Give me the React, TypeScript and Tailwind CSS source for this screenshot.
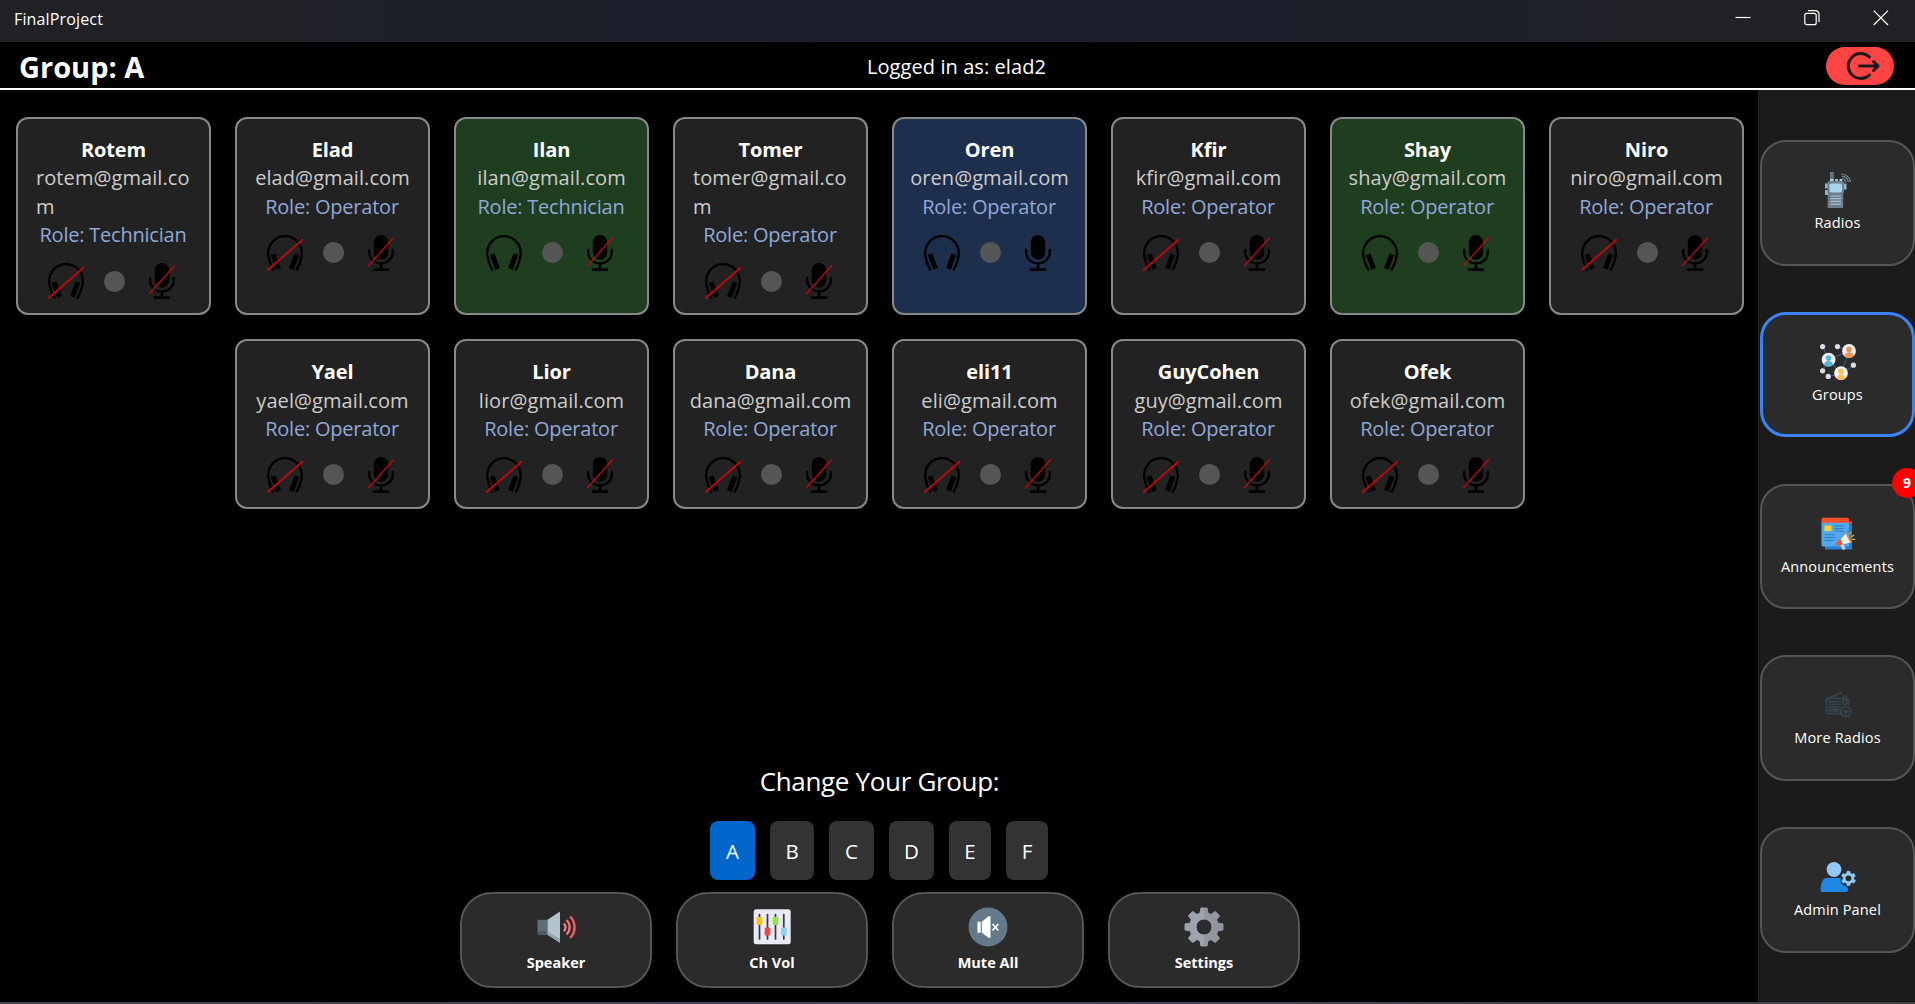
import React from "react";

type Status = "idle" | "listening" | "talking";

interface Member {
  name: string;
  email: string;
  role: "Operator" | "Technician";
  status: Status;
}

const op = (name: string, user: string, status: Status = "idle", role: Member["role"] = "Operator"): Member => ({
  name,
  email: `${user}@gmail.com`,
  role,
  status,
});

const members: Member[] = [
  op("Rotem", "rotem", "idle", "Technician"),
  op("Elad", "elad"),
  op("Ilan", "ilan", "listening", "Technician"),
  op("Tomer", "tomer"),
  op("Oren", "oren", "talking"),
  op("Kfir", "kfir"),
  op("Shay", "shay", "listening"),
  op("Niro", "niro"),
  op("Yael", "yael"),
  op("Lior", "lior"),
  op("Dana", "dana"),
  op("eli11", "eli"),
  op("GuyCohen", "guy"),
  op("Ofek", "ofek"),
];

const cardColors: Record<Status, string> = {
  idle: "bg-[#222222]",
  listening: "bg-[#1f3d1f]",
  talking: "bg-[#1e2e4d]",
};

function Headphones({ off }: { off: boolean }) {
  return (
    <svg width="36" height="36" viewBox="0 0 36 36" fill="none" stroke="#000" strokeLinecap="round">
      <path d="M1.2 20V18.200a16.800 17 0 0 1 33.600 0V20" strokeWidth="2.300" />
      <path d="M1.400 21c.8 5 2.400 9.500 4.800 13.700M34.600 21c-.8 5-2.400 9.500-4.800 13.700" strokeWidth="2.400" />
      <path d="M7 21.600l3.700 10M29 21.600l-3.700 10" strokeWidth="5" strokeLinecap="square" />
      {off && <path d="M.8 35L35.400 4.800" stroke="#c00a0a" strokeWidth="1.800" />}
    </svg>
  );
}

function Mic({ off }: { off: boolean }) {
  return (
    <svg width="36" height="36" viewBox="0 0 36 36" fill="none" stroke="#000" strokeLinecap="round">
      <rect x="10.800" y="0" width="14.400" height="24.700" rx="7.200" fill="#000" stroke="none" />
      <path d="M6.200 15v2.500a11.800 11 0 0 0 23.600 0V15" strokeWidth="2.300" />
      <path d="M18 28.500V34" strokeWidth="2.600" />
      <path d="M11 34.600h14" strokeWidth="2.600" />
      {off && <path d="M5.500 30.800L30.500 2.700" stroke="#c00a0a" strokeWidth="1.300" />}
    </svg>
  );
}

function MemberCard({ member }: { member: Member }) {
  const wraps = member.email.length > 14;
  return (
    <div
      className={`flex w-[195px] flex-col items-center rounded-xl border-2 border-[#888888] px-3.5 pt-[17px] pb-3.5 text-[20px] leading-[28.4px] ${cardColors[member.status]}`}
    >
      <div className="font-bold tracking-[-0.1px] text-white">{member.name}</div>
      <div className={`break-all tracking-[0.08px] text-[#cccccc] ${wraps ? "w-[155px]" : "whitespace-nowrap"}`}>
        {member.email}
      </div>
      <div className="pr-px tracking-[-0.22px] text-[#8fa8d8]">Role: {member.role}</div>
      <div className="mt-[13.5px] flex items-center pl-px">
        <Headphones off={member.status === "idle"} />
        <span className="mr-[19px] ml-5 size-[21px] rounded-full bg-[#555555]" />
        <Mic off={member.status !== "talking"} />
      </div>
    </div>
  );
}

function RadioIcon() {
  return (
    <svg width="36" height="36" viewBox="0 0 36 36">
      <rect x="10" y="0" width="3.800" height="9" fill="#66757f" />
      <path d="M10 7h3.500v3H10zM15.200 7h2.600v3h-2.600zM19.500 7h2.600v3h-2.600z" fill="#a9d3e8" />
      <path d="M5 11.500h3v5H5zM5 18h3v5H5zM23.500 11.500h3v6h-3z" fill="#8fb4c7" />
      <path d="M7.500 10.500a1.500 1.500 0 0 1 1.500-1.500h13.500a1.500 1.500 0 0 1 1.500 1.500v9.500l-.8 2V35a1 1 0 0 1-1 1H8.700a1 1 0 0 1-1-1V22z" fill="#6d7d8b" />
      <rect x="9.500" y="11.500" width="12.500" height="9" rx="1.800" fill="#a9d3e8" />
      <path d="M10.500 24h10.500M10.500 26.700h10.500M10.500 29.400h10.500M10.500 32.100h10.500" stroke="#a3c3d3" strokeWidth="1.200" />
      <path d="M22 6.500a4.500 4.500 0 0 1 3.800 3.500M21.800 4.200a7 7 0 0 1 6.500 5.800M21.500 2a9.300 9.300 0 0 1 9 8" fill="none" stroke="#6f8c9c" strokeWidth="1.200" />
    </svg>
  );
}

function Person({ x, y, color }: { x: number; y: number; color: string }) {
  return (
    <g transform={`translate(${x} ${y})`}>
      <circle r="6.900" fill="#f3f1f8" />
      <circle cy="-1.600" r="2.800" fill={color} />
      <path d="M-4.500 5.200C-4.500 0 4.500 0 4.500 5.200A6.900 6.900 0 0 1-4.500 5.200z" fill={color} />
    </g>
  );
}

function GroupsIcon() {
  return (
    <svg width="36" height="36" viewBox="0 0 36 36">
      <path d="M2.500 2.500L8.500 15.500 29 7 17.500 2.500M29 7l-8 22.500L8.500 15.500 2.500 27M8 32.500l13-3L34 21" stroke="#3d5c96" fill="none" />
      {[[2.600, 2.600], [17.500, 2.600], [2.600, 26.800], [8.200, 32.400], [33.400, 21.200]].map(([x, y]) => (
        <circle key={`${x}-${y}`} cx={x} cy={y} r="2.600" fill="#dddbe8" />
      ))}
      <Person x={29} y={7} color="#f0944a" />
      <Person x={8.600} y={15.700} color="#55b7d6" />
      <Person x={21} y={29.100} color="#fbc34d" />
    </svg>
  );
}

function NewsIcon() {
  return (
    <svg width="36" height="36" viewBox="0 0 36 36">
      <path d="M5 5h27v28.500H5z" fill="#2382cf" />
      <path d="M28 5h4v4h-4z" fill="#e6391e" />
      <path d="M1.500 6H29v24.500H3A1.500 1.500 0 0 1 1.500 29z" fill="#52a8ec" />
      <path d="M29 12v16L14 30.500z" fill="#3d99e2" />
      <path d="M1.500 3.200A1.500 1.500 0 0 1 3 1.700h24.500A1.500 1.500 0 0 1 29 3.200v3.600H1.500z" fill="#ff5128" />
      <rect x="4.500" y="9.500" width="7" height="5.600" fill="#ffd02b" />
      <path d="M14.500 10h9.500M14.500 12.500h9.500M14.500 15h9.500M4.500 18.800H15M4.500 21.500H15M4.500 24.500h9" stroke="#2a7dc4" strokeWidth="1.100" />
      <path d="M19.500 28.500l3.300-1.500 3 5.500-2.800 1.700z" fill="#c9cfdb" />
      <path d="M17 25.500l3.500-2 2.700 4.500-3.500 1.700c-2 .4-4-2.500-2.700-4.200z" fill="#ff5128" />
      <path d="M20.500 23.500L26 17l5 9.500-8 1.700z" fill="#f1f4fa" />
      <path d="M25 17.200l1.700-.7 5 9.500-1.400 1z" fill="#ff8f1f" />
      <path d="M29.500 18.500l1.300-3M31.300 20.700l3-1.600M32 23.200l3.200.4" stroke="#ff9d1f" strokeWidth="1.200" />
    </svg>
  );
}

function MoreRadiosIcon() {
  return (
    <svg width="36" height="36" viewBox="0 0 36 36" fill="none" stroke="#36444e" strokeWidth="1.600">
      <path d="M7 11.500L22.500 5.500M22.500 11.500l2.500-2.300 2.500 2.300" />
      <path d="M21 26.500H7.500A1.200 1.200 0 0 1 6.300 25.300V12.700A1.200 1.200 0 0 1 7.500 11.500h20A1.200 1.200 0 0 1 28.700 12.700V18" />
      <path d="M8 14.500h13M8 17.300h13M8 20h13M8.500 24v-1.800h10V24z" />
      <circle cx="25" cy="15" r="2.300" />
      <circle cx="25.800" cy="24.600" r="5" strokeWidth="1.900" />
      <path d="M25.800 21.500v6.200M22.700 24.600h6.200" />
    </svg>
  );
}

/** Outline of a cog centred on (0, 0). */
function cogPath(teeth: number, outer: number, inner: number, tip: number, base: number) {
  const points: string[] = [];
  for (let i = 0; i < teeth; i++) {
    const a = (i * 2 * Math.PI) / teeth - Math.PI / 2;
    const corners: [number, number][] = [
      [inner, -base],
      [outer, -tip],
      [outer, tip],
      [inner, base],
    ];
    corners.forEach(([r, d]) => points.push(`${(r * Math.cos(a + d)).toFixed(2)} ${(r * Math.sin(a + d)).toFixed(2)}`));
  }
  return `M${points.join("L")}Z`;
}

function AdminIcon() {
  return (
    <svg width="36" height="36" viewBox="0 0 36 36">
      <path d="M.5 30.500c0-5 2-11.500 6-11.500h14.500c-1 4 0 6 3 7.300 2 .5 4 1.500 4 4.700 0 1.300-.7 2-2 2H2.500c-1.300 0-2-.8-2-2.500z" fill="#1e88e5" />
      <circle cx="14" cy="10.500" r="7.400" fill="#90caf9" />
      <g transform="translate(28.500 19.300)">
        <path d={cogPath(6, 7.300, 5.400, 0.200, 0.330)} fill="#90caf9" stroke="#90caf9" strokeWidth=".6" />
        <circle r="2.900" fill="#2b2b2b" />
      </g>
    </svg>
  );
}

function SpeakerIcon() {
  return (
    <svg width="40" height="40" viewBox="0 0 40 40">
      <path d="M1.500 12.700h10v15h-8a2 2 0 0 1-2-2z" fill="#5c6f79" />
      <path d="M1.500 24.500l10-1v4.200h-8a2 2 0 0 1-2-2z" fill="#4a5c66" />
      <path d="M11.500 12.700L24 4.500v31.200L11.500 27.700z" fill="#b3c2cd" />
      <path d="M11.500 24.500L24 32v3.700L11.500 27.700z" fill="#94a5b2" />
      <path d="M27.800 16.500a5 5 0 0 1 0 7.600" fill="none" stroke="#f5828a" strokeWidth="2.200" />
      <path d="M30.500 13a10 10 0 0 1 0 14.500" fill="none" stroke="#f5727b" strokeWidth="2.300" />
      <path d="M34.200 9.500a15.500 15.500 0 0 1 0 21.500" fill="none" stroke="#f05a66" strokeWidth="2.500" />
    </svg>
  );
}

function MixerIcon() {
  const sliders = [
    { x: 7.500, y: 10.500, color: "#ffc400" },
    { x: 15.500, y: 21, color: "#f4483e" },
    { x: 23.500, y: 10.500, color: "#92e83e" },
    { x: 31.800, y: 21, color: "#8cd0ff" },
  ];
  return (
    <svg width="40" height="40" viewBox="0 0 40 40">
      <rect x="1.700" y="2.200" width="37" height="35" rx="2.500" fill="#e8eaf6" />
      {sliders.map((s) => (
        <g key={s.x}>
          <path d={`M${s.x} 7.500V32`} stroke="#383645" strokeWidth="1.700" strokeLinecap="round" />
          <rect x={s.x - 2.800} y={s.y - 0.500} width="5.600" height="8" rx="1" fill={s.color} />
        </g>
      ))}
    </svg>
  );
}

function MuteIcon() {
  return (
    <svg width="40" height="40" viewBox="0 0 40 40">
      <circle cx="20" cy="20" r="19.500" fill="#64798a" />
      <path d="M9.500 14.800h3.200v11H9.500zM13.800 14.800L20.500 9.300h2v21.400h-2l-6.700-5.200z" fill="#fff" />
      <path d="M24.500 17l5.800 6.500M30.300 17l-5.800 6.500" stroke="#fff" strokeWidth="1.700" />
    </svg>
  );
}

function SettingsIcon() {
  return (
    <svg width="40" height="40" viewBox="-20 -20 40 40">
      <defs>
        <linearGradient id="cog" x1="0" x2="1">
          <stop offset=".5" stopColor="#9ea3b0" />
          <stop offset=".5" stopColor="#92969f" />
        </linearGradient>
      </defs>
      <path
        fillRule="evenodd"
        d={`${cogPath(8, 19.200, 14.500, 0.160, 0.270)}M8 0A8 8 0 1 0-8 0A8 8 0 1 0 8 0Z`}
        fill="url(#cog)"
        stroke="url(#cog)"
        strokeLinejoin="round"
      />
    </svg>
  );
}

const navItems = [
  { label: "Radios", icon: RadioIcon },
  { label: "Groups", icon: GroupsIcon, active: true },
  { label: "Announcements", icon: NewsIcon, badge: 9 },
  { label: "More Radios", icon: MoreRadiosIcon },
  { label: "Admin Panel", icon: AdminIcon },
];

const actions = [
  { label: "Speaker", icon: SpeakerIcon },
  { label: "Ch Vol", icon: MixerIcon },
  { label: "Mute All", icon: MuteIcon },
  { label: "Settings", icon: SettingsIcon },
];

const groups = [
  { label: "A", width: "w-[45px]" },
  { label: "B", width: "w-[44px]" },
  { label: "C", width: "w-[45px]" },
  { label: "D", width: "w-[45px]" },
  { label: "E", width: "w-[42px]" },
  { label: "F", width: "w-[42px]" },
];

function TitleBar() {
  return (
    <div className="flex h-[42px] shrink-0 items-start justify-between bg-linear-to-r from-[#202124] via-[#1c202d] to-[#202124] pt-[7px] pl-[14px] text-white">
      <span className="pt-px text-[16px] leading-[22px] tracking-[0.15px]">FinalProject</span>
      <div className="flex gap-[53px] pt-[3px] pr-[26.5px]">
        <svg width="16" height="16" viewBox="0 0 16 16" stroke="#fff" strokeWidth="1.200">
          <path d="M.5 7.500h15" />
        </svg>
        <svg width="16" height="16" viewBox="0 0 16 16" fill="none" stroke="#fff" strokeWidth="1.200">
          <rect x=".8" y="3.300" width="11.400" height="11.400" rx="2" />
          <path d="M4 .7h7.500A3.500 3.500 0 0 1 15 4.200V12" />
        </svg>
        <svg width="16" height="16" viewBox="0 0 16 16" stroke="#fff" strokeWidth="1.200">
          <path d="M.7.7l14.300 14.300M15 .7L.7 15" />
        </svg>
      </div>
    </div>
  );
}

function Header() {
  return (
    <header className="grid h-12 shrink-0 grid-cols-3 items-center border-b-2 border-white bg-black pt-0.5 pr-[21px] pl-[19px] text-white">
      <h1 className="text-[29px] leading-none font-bold">Group: A</h1>
      <div className="pt-0.5 text-center text-[20px] leading-none tracking-[0.08px]">Logged in as: elad2</div>
      <button className="flex h-[38px] w-[68px] items-center justify-center justify-self-end rounded-[19px] bg-[#ff4444] pl-1.5">
        <svg width="36" height="30" viewBox="0 0 36 30" fill="none" stroke="#1a1a1a" strokeWidth="3" strokeLinecap="round" strokeLinejoin="round">
          <path d="M24.500 6A12.500 12.500 0 1 0 24.500 24" />
          <path d="M14.500 15H33M28.500 10.500L33 15l-4.500 4.500" />
        </svg>
      </button>
    </header>
  );
}

export default function App() {
  return (
    <div className="flex h-[1004px] w-[1915px] flex-col overflow-hidden bg-black font-['Open_Sans','Noto_Sans',sans-serif]">
      <TitleBar />
      <Header />
      <div className="flex min-h-0 flex-1">
        <main className="flex w-[1758px] flex-col items-center pt-[27px] pb-[14px] pl-[2px]">
          <div className="flex w-full flex-wrap justify-center gap-6">
            {members.map((m) => (
              <MemberCard key={m.name} member={m} />
            ))}
          </div>
          <div className="mt-auto pr-px text-[26px] leading-9 tracking-[-0.33px] text-white">Change Your Group:</div>
          <div className="mt-[22px] flex gap-[15px] pr-[2px]">
            {groups.map((g) => (
              <button
                key={g.label}
                className={`h-[59px] rounded-lg pt-0.5 text-[20.5px] text-white ${g.width} ${g.label === "A" ? "bg-[#0066cc]" : "bg-[#333333]"}`}
              >
                {g.label}
              </button>
            ))}
          </div>
          <div className="mt-3 flex gap-6">
            {actions.map(({ label, icon: Icon }) => (
              <button
                key={label}
                className="flex h-24 w-48 flex-col items-center rounded-[32px] border-2 border-[#555555] bg-[#2b2b2b] pt-[13px] text-[14.5px] leading-5 font-bold text-white"
              >
                <Icon />
                <span className="mt-1.5">{label}</span>
              </button>
            ))}
          </div>
        </main>
        <aside className="flex flex-1 flex-col gap-[46.25px] border-l border-[#222222] bg-[#1b1b1b] pt-[50px] pl-px">
          {navItems.map(({ label, icon: Icon, active, badge }) => (
            <button
              key={label}
              className={`relative flex h-[125.5px] w-full shrink-0 flex-col items-center rounded-[26px] bg-[#2b2b2b] text-[14.5px] leading-5 tracking-[0.15px] text-white ${
                active ? "border-[3px] border-[#3b82f6] pt-[29px]" : "border-2 border-[#555555] pt-[30px]"
              }`}
            >
              <Icon />
              <span className="mt-[5px]">{label}</span>
              {badge && (
                <span className="absolute -top-[18px] -right-[9px] flex h-[30px] w-[30px] items-center justify-center rounded-full bg-[#ff0000] text-[14px] font-bold">
                  {badge}
                </span>
              )}
            </button>
          ))}
        </aside>
      </div>
      <div className="h-0.5 shrink-0 bg-linear-to-r from-[#404048] via-[#45455e] to-[#404044]" />
    </div>
  );
}
